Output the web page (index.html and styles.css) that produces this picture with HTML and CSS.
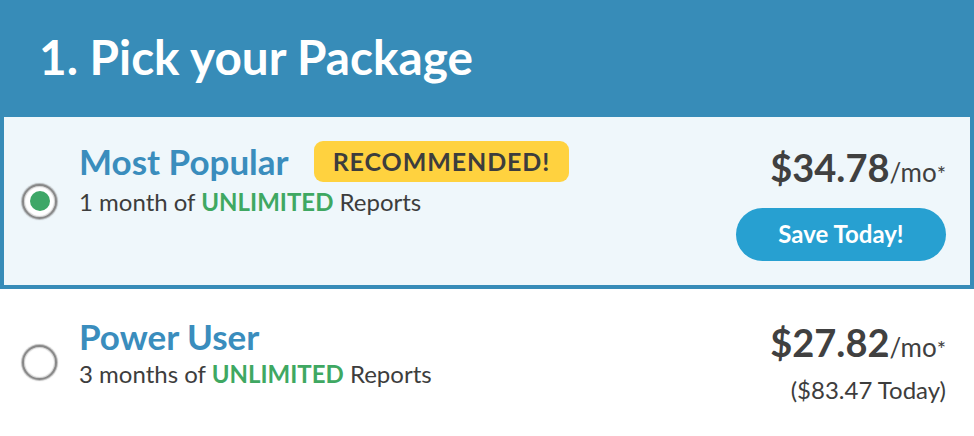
FILE: index.html
```html
<!DOCTYPE html>
<html>
<head>
<meta charset="utf-8">
<link rel="stylesheet" href="styles.css">
</head>
<body>
<div class="panel">
  <header class="panel-head">
    <h1 class="panel-title">1. Pick your Package</h1>
  </header>
  <div class="option option--selected">
    <span class="radio radio--on"></span>
    <div class="info">
      <div class="name-row">
        <span class="name">Most Popular</span>
        <span class="badge">RECOMMENDED!</span>
      </div>
      <div class="desc">1 month of <strong class="hl">UNLIMITED</strong> Reports</div>
    </div>
    <div class="pricing">
      <div class="price">$34.78<span class="per">/mo<span class="ast">*</span></span></div>
      <button class="cta">Save Today!</button>
    </div>
  </div>
  <div class="option option--plain">
    <span class="radio"></span>
    <div class="info">
      <div class="name-row">
        <span class="name">Power User</span>
      </div>
      <div class="desc">3 months of <strong class="hl">UNLIMITED</strong> Reports</div>
    </div>
    <div class="pricing">
      <div class="price">$27.82<span class="per">/mo<span class="ast">*</span></span></div>
      <div class="today">($83.47 Today)</div>
    </div>
  </div>
</div>
</body>
</html>
```
FILE: styles.css
```css
* { box-sizing: border-box; }
html, body { margin: 0; padding: 0; background: #ffffff; }
body { font-family: Lato, "Open Sans", Arial, sans-serif; color: #3d3d3d; width: 974px; overflow: hidden; }

.panel-head {
  background: #378cb8;
  height: 117px;
  display: flex;
  align-items: center;
  padding-left: 39px;
}
.panel-title {
  margin: 0;
  color: #ffffff;
  font-size: 47.7px;
  font-weight: 700;
  line-height: 1.2;
  padding-bottom: 4px;
}

.option {
  display: flex;
  align-items: center;
  height: 172px;
}
.option--selected {
  background: #eff7fb;
  border: 4px solid #378cb8;
  border-top: 0;
  padding: 0 24px 0 18px;
}
.option--plain {
  height: 147px;
  padding: 0 28px 0 22px;
}

.radio {
  flex: none;
  width: 35px;
  height: 35px;
  border-radius: 50%;
  background: #ffffff;
  border: 2px solid #888888;
  box-shadow: 0 0 1px 1px rgba(120,120,120,0.5), inset 0 0 1px 1px rgba(150,150,150,0.45);
  display: flex;
  align-items: center;
  justify-content: center;
  margin-right: 22px;
}
.radio--on::after {
  content: "";
  width: 20px;
  height: 20px;
  border-radius: 50%;
  background: #3ea767;
}

.info {
  flex: 1;
  align-self: flex-start;
}
.option--selected .info { padding-top: 23px; }
.option--plain .info { padding-top: 26px; }

.name-row {
  display: flex;
  align-items: center;
  gap: 25px;
}
.name {
  font-size: 35px;
  font-weight: 700;
  color: #3a8dbd;
  line-height: 1.2;
}
.badge {
  background: #ffd23f;
  color: #3d3d3d;
  font-size: 25px;
  font-weight: 700;
  line-height: 41px;
  height: 41px;
  padding: 0 19px;
  border-radius: 9px;
  letter-spacing: 0.9px;
}
.desc {
  font-size: 24px;
  line-height: 1.2;
  margin-top: 6px;
}
.option--plain .desc { margin-top: 3px; }
.hl { color: #3fa862; font-weight: 700; }

.pricing {
  display: flex;
  flex-direction: column;
  align-items: flex-end;
  align-self: flex-start;
}
.option--selected .pricing { padding-top: 28px; }
.option--plain .pricing { padding-top: 31px; }
.price {
  font-size: 38px;
  font-weight: 700;
  color: #404040;
  line-height: 1.2;
}
.per {
  font-size: 26px;
  font-weight: 400;
}
.ast {
  font-size: 22px;
}
.cta {
  margin-top: 17px;
  width: 210px;
  height: 53px;
  border: 0;
  border-radius: 27px;
  background: #27a0d1;
  color: #ffffff;
  font-family: Lato, Arial, sans-serif;
  font-size: 24px;
  font-weight: 700;
  padding: 0 0 2px;
}
.today {
  font-size: 24px;
  line-height: 1.2;
  margin-top: 10px;
}
```
